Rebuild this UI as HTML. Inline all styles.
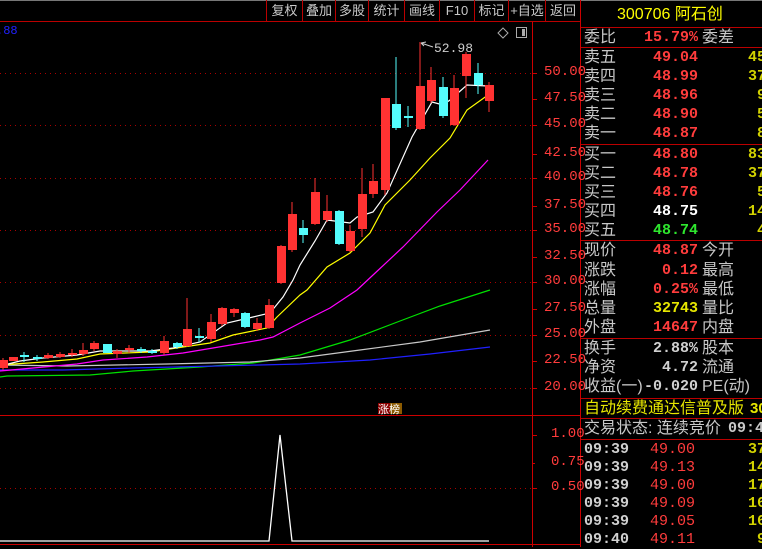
<!DOCTYPE html>
<html><head><meta charset="utf-8"><style>
*{margin:0;padding:0;box-sizing:border-box}
body{width:762px;height:547px;background:#000;overflow:hidden;position:relative;font-family:"Liberation Sans","Noto Sans CJK SC",sans-serif}
.tb{position:absolute;top:0;height:21px;color:#c8c8c8;font-size:13px;line-height:22px;text-align:center;border-right:1px solid #b00}
.p{position:absolute;left:584px;width:178px;font-size:16px;color:#c8c8c8;white-space:nowrap;height:19px;line-height:19px}
.p span{position:absolute}
.l{left:0}.v{right:64px;text-align:right;font-weight:bold;font-family:"Liberation Mono",monospace;font-size:15px}
.r2{left:118px}.y{color:#e6e600}.rd{color:#ff3c3c}.w{color:#fff}.g{color:#2ee62e}.gr{color:#d0d0d0}
.n{left:164px;font-weight:bold;font-family:"Liberation Mono",monospace;color:#d2d200;font-size:15px}
.t{font-weight:bold;font-family:"Liberation Mono",monospace;font-size:15px;color:#d0d0d0}
.hl{position:absolute;left:581px;width:181px;height:1px;background:#b00}
.ax{position:absolute;left:544px;color:#ff3c3c;font-size:14px;font-family:"Liberation Mono",monospace}
</style></head><body>
<div style="position:absolute;left:0;top:0;width:762px;height:1px;background:#777"></div>
<div style="position:absolute;left:0;top:21px;width:581px;height:1px;background:#b00"></div>
<div class="tb" style="left:266px;width:37px;border-left:1px solid #b00">复权</div>
<div class="tb" style="left:303px;width:33px">叠加</div>
<div class="tb" style="left:336px;width:33px">多股</div>
<div class="tb" style="left:369px;width:36px">统计</div>
<div class="tb" style="left:405px;width:35px">画线</div>
<div class="tb" style="left:440px;width:35px">F10</div>
<div class="tb" style="left:475px;width:34px">标记</div>
<div class="tb" style="left:509px;width:37px">+自选</div>
<div class="tb" style="left:546px;width:35px">返回</div>
<div style="position:absolute;left:-4px;top:24px;color:#2020ff;font-size:12px;font-family:'Liberation Mono',monospace">.88</div>

<svg width="581" height="547" style="position:absolute;left:0;top:0">
<g stroke="#a00" stroke-dasharray="1,4" stroke-width="1">
<line x1="0" y1="73.5" x2="532" y2="73.5"/><line x1="0" y1="125.5" x2="532" y2="125.5"/><line x1="0" y1="178.5" x2="532" y2="178.5"/><line x1="0" y1="230.5" x2="532" y2="230.5"/><line x1="0" y1="282.5" x2="532" y2="282.5"/><line x1="0" y1="335.5" x2="532" y2="335.5"/><line x1="0" y1="388.5" x2="532" y2="388.5"/><line x1="0" y1="488.5" x2="532" y2="488.5"/>
</g>
<line x1="532.5" y1="22" x2="532.5" y2="547" stroke="#c00"/>
<line x1="0" y1="415.5" x2="581" y2="415.5" stroke="#c00"/>
<line x1="0" y1="544.5" x2="581" y2="544.5" stroke="#c00"/>
<line x1="580.5" y1="0" x2="580.5" y2="547" stroke="#c00"/>
<g stroke="#c00"><line x1="532" y1="73.5" x2="537" y2="73.5"/><line x1="532" y1="99.5" x2="537" y2="99.5"/><line x1="532" y1="125.5" x2="537" y2="125.5"/><line x1="532" y1="154.5" x2="537" y2="154.5"/><line x1="532" y1="178.5" x2="537" y2="178.5"/><line x1="532" y1="206.5" x2="537" y2="206.5"/><line x1="532" y1="230.5" x2="537" y2="230.5"/><line x1="532" y1="257.5" x2="537" y2="257.5"/><line x1="532" y1="282.5" x2="537" y2="282.5"/><line x1="532" y1="309.5" x2="537" y2="309.5"/><line x1="532" y1="335.5" x2="537" y2="335.5"/><line x1="532" y1="361.5" x2="537" y2="361.5"/><line x1="532" y1="388.5" x2="537" y2="388.5"/><line x1="532" y1="435.5" x2="537" y2="435.5"/><line x1="532" y1="463.5" x2="535" y2="463.5"/><line x1="532" y1="488.5" x2="537" y2="488.5"/></g>
<path d="M503 28 L508 33 L503 38 L498 33 Z" fill="none" stroke="#aaa"/>
<rect x="516.5" y="27.5" width="10" height="10" fill="none" stroke="#aaa"/><rect x="522" y="29" width="3" height="7" fill="#aaa"/>
<g fill="none" stroke-width="1.2">
<polyline stroke="#00e000" points="0,377 7,376 90,375 133,371 200,367 253,363 300,355 350,340 400,321 440,306 490,290"/>
<polyline stroke="#c8c8c8" points="0,365 67,366 167,364 250,362 300,358 360,350 420,342 490,330"/>
<polyline stroke="#2020ff" points="0,370 63,370 133,368 217,366 300,364 370,360 430,354 490,347"/>
<polyline stroke="#ff00ff" points="0,371 33,368 77,364 103,360 147,357 183,353 213,348 260,340 273,337 300,323 330,308 357,290 403,247 437,212 460,190 488,160"/>
<polyline stroke="#ffff00" points="0,365 43,362 77,359 100,354 150,352 183,347 210,343 233,335 267,328 277,317 300,295 307,290 327,267 350,253 370,233 385,205 410,180 430,158 450,138 467,110 488,95"/>
<polyline stroke="#ffffff" points="0,366 20,361 43,358 77,355 100,351 150,351 173,348 200,342 227,323 253,317 270,313 283,297 293,280 300,265 315,241 327,220 350,223 357,217 373,212 387,193 412,137 432,102 443,105 450,100 467,85 488,86"/>
</g>
<g fill="#ff3232" stroke="#ff3232">
<line x1="3" y1="358" x2="3" y2="370"/><rect x="-1" y="360" width="9" height="8" stroke="none"/>
<rect x="9" y="357" width="9" height="4" stroke="none"/>
<line x1="48" y1="353" x2="48" y2="359"/><rect x="44" y="355" width="9" height="3" stroke="none"/>
<line x1="60" y1="352" x2="60" y2="358"/><rect x="56" y="354" width="9" height="3" stroke="none"/>
<line x1="72" y1="349" x2="72" y2="357"/><rect x="68" y="353" width="9" height="2" stroke="none"/>
<line x1="83" y1="343" x2="83" y2="356"/><rect x="79" y="350" width="9" height="4" stroke="none"/>
<line x1="94" y1="341" x2="94" y2="351"/><rect x="90" y="343" width="9" height="6" stroke="none"/>
<line x1="117" y1="349" x2="117" y2="358"/><rect x="113" y="351" width="9" height="3" stroke="none"/>
<line x1="129" y1="345" x2="129" y2="353"/><rect x="125" y="348" width="9" height="2" stroke="none"/>
<line x1="164" y1="336" x2="164" y2="355"/><rect x="160" y="341" width="9" height="12" stroke="none"/>
<line x1="187" y1="298" x2="187" y2="347"/><rect x="183" y="329" width="9" height="17" stroke="none"/>
<line x1="211" y1="314" x2="211" y2="342"/><rect x="207" y="322" width="9" height="17" stroke="none"/>
<line x1="222" y1="307" x2="222" y2="326"/><rect x="218" y="308" width="9" height="16" stroke="none"/>
<line x1="234" y1="308" x2="234" y2="317"/><rect x="230" y="309" width="9" height="4" stroke="none"/>
<line x1="257" y1="318" x2="257" y2="331"/><rect x="253" y="323" width="9" height="6" stroke="none"/>
<line x1="269" y1="299" x2="269" y2="329"/><rect x="265" y="305" width="9" height="23" stroke="none"/>
<line x1="281" y1="245" x2="281" y2="284"/><rect x="277" y="246" width="9" height="37" stroke="none"/>
<line x1="292" y1="202" x2="292" y2="252"/><rect x="288" y="214" width="9" height="36" stroke="none"/>
<line x1="315" y1="178" x2="315" y2="225"/><rect x="311" y="192" width="9" height="32" stroke="none"/>
<line x1="327" y1="195" x2="327" y2="222"/><rect x="323" y="211" width="9" height="9" stroke="none"/>
<line x1="350" y1="225" x2="350" y2="252"/><rect x="346" y="231" width="9" height="20" stroke="none"/>
<line x1="362" y1="168" x2="362" y2="237"/><rect x="358" y="194" width="9" height="35" stroke="none"/>
<line x1="373" y1="164" x2="373" y2="198"/><rect x="369" y="181" width="9" height="13" stroke="none"/>
<line x1="385" y1="98" x2="385" y2="195"/><rect x="381" y="98" width="9" height="92" stroke="none"/>
<line x1="420" y1="42" x2="420" y2="130"/><rect x="416" y="86" width="9" height="43" stroke="none"/>
<line x1="431" y1="67" x2="431" y2="103"/><rect x="427" y="80" width="9" height="21" stroke="none"/>
<line x1="454" y1="75" x2="454" y2="126"/><rect x="450" y="88" width="9" height="37" stroke="none"/>
<line x1="466" y1="52" x2="466" y2="98"/><rect x="462" y="54" width="9" height="22" stroke="none"/>
<line x1="489" y1="82" x2="489" y2="112"/><rect x="485" y="85" width="9" height="16" stroke="none"/>
</g>
<g fill="#54fcfc" stroke="#54fcfc">
<line x1="24" y1="352" x2="24" y2="362"/><rect x="20" y="355" width="9" height="2" stroke="none"/>
<line x1="37" y1="355" x2="37" y2="361"/><rect x="33" y="357" width="9" height="2" stroke="none"/>
<rect x="103" y="344" width="9" height="9" stroke="none"/>
<line x1="141" y1="347" x2="141" y2="353"/><rect x="137" y="349" width="9" height="2" stroke="none"/>
<line x1="152" y1="349" x2="152" y2="354"/><rect x="148" y="351" width="9" height="2" stroke="none"/>
<line x1="177" y1="342" x2="177" y2="349"/><rect x="173" y="343" width="9" height="4" stroke="none"/>
<line x1="199" y1="328" x2="199" y2="342"/><rect x="195" y="336" width="9" height="2" stroke="none"/>
<line x1="245" y1="312" x2="245" y2="328"/><rect x="241" y="313" width="9" height="14" stroke="none"/>
<line x1="303" y1="220" x2="303" y2="243"/><rect x="299" y="228" width="9" height="7" stroke="none"/>
<line x1="339" y1="210" x2="339" y2="245"/><rect x="335" y="211" width="9" height="33" stroke="none"/>
<line x1="396" y1="57" x2="396" y2="130"/><rect x="392" y="104" width="9" height="24" stroke="none"/>
<line x1="408" y1="106" x2="408" y2="127"/><rect x="404" y="116" width="9" height="2" stroke="none"/>
<line x1="443" y1="77" x2="443" y2="118"/><rect x="439" y="87" width="9" height="29" stroke="none"/>
<line x1="478" y1="63" x2="478" y2="94"/><rect x="474" y="73" width="9" height="12" stroke="none"/>
</g>
<path d="M421 43 L426 42 M421 43 L424 46 M421 43 L433 47" stroke="#ccc" fill="none"/>
<text x="434" y="52" fill="#ccc" font-size="13" font-family="Liberation Mono,monospace">52.98</text>
<rect x="378" y="403" width="12" height="11" fill="#8b0000"/><rect x="390" y="403" width="12" height="11" fill="#8b5a00"/>
<text x="378" y="413" fill="#fff" font-size="11" font-family="Noto Sans CJK SC,sans-serif">涨榜</text>
<polyline fill="none" stroke="#fff" stroke-width="1.3" points="0,541 269,541 280,435 292,541 489,541"/>
</svg>

<div class="ax" style="top:64px">50.00</div><div class="ax" style="top:90px">47.50</div><div class="ax" style="top:116px">45.00</div><div class="ax" style="top:145px">42.50</div><div class="ax" style="top:169px">40.00</div><div class="ax" style="top:197px">37.50</div><div class="ax" style="top:221px">35.00</div><div class="ax" style="top:248px">32.50</div><div class="ax" style="top:273px">30.00</div><div class="ax" style="top:300px">27.50</div><div class="ax" style="top:326px">25.00</div><div class="ax" style="top:352px">22.50</div><div class="ax" style="top:379px">20.00</div>
<div class="ax" style="top:426px;left:551px">1.00</div><div class="ax" style="top:454px;left:551px">0.75</div><div class="ax" style="top:479px;left:551px">0.50</div>

<div class="p" style="top:5px;color:#ffff00;left:617px">300706 阿石创</div>
<div class="hl" style="top:27px"></div>
<div class="p" style="top:28px"><span class="l">委比</span><span class="v rd">15.79%</span><span class="r2">委差</span></div>
<div class="hl" style="top:47px"></div>
<div class="p" style="top:48px"><span class="l">卖五</span><span class="v rd">49.04</span><span class="n">45</span></div>
<div class="p" style="top:67px"><span class="l">卖四</span><span class="v rd">48.99</span><span class="n">37</span></div>
<div class="p" style="top:86px"><span class="l">卖三</span><span class="v rd">48.96</span><span class="n">&nbsp;9</span></div>
<div class="p" style="top:105px"><span class="l">卖二</span><span class="v rd">48.90</span><span class="n">&nbsp;5</span></div>
<div class="p" style="top:124px"><span class="l">卖一</span><span class="v rd">48.87</span><span class="n">&nbsp;8</span></div>
<div class="hl" style="top:144px"></div>
<div class="p" style="top:145px"><span class="l">买一</span><span class="v rd">48.80</span><span class="n">83</span></div>
<div class="p" style="top:164px"><span class="l">买二</span><span class="v rd">48.78</span><span class="n">37</span></div>
<div class="p" style="top:183px"><span class="l">买三</span><span class="v rd">48.76</span><span class="n">&nbsp;5</span></div>
<div class="p" style="top:202px"><span class="l">买四</span><span class="v w">48.75</span><span class="n">14</span></div>
<div class="p" style="top:221px"><span class="l">买五</span><span class="v g">48.74</span><span class="n">&nbsp;4</span></div>
<div class="hl" style="top:240px"></div>
<div class="p" style="top:241px"><span class="l">现价</span><span class="v rd">48.87</span><span class="r2">今开</span></div>
<div class="p" style="top:261px"><span class="l">涨跌</span><span class="v rd">0.12</span><span class="r2">最高</span></div>
<div class="p" style="top:280px"><span class="l">涨幅</span><span class="v rd">0.25%</span><span class="r2">最低</span></div>
<div class="p" style="top:299px"><span class="l">总量</span><span class="v y">32743</span><span class="r2">量比</span></div>
<div class="p" style="top:318px"><span class="l">外盘</span><span class="v rd">14647</span><span class="r2">内盘</span></div>
<div class="hl" style="top:338px"></div>
<div class="p" style="top:339px"><span class="l">换手</span><span class="v gr">2.88%</span><span class="r2">股本</span></div>
<div class="p" style="top:358px"><span class="l">净资</span><span class="v gr">4.72</span><span class="r2">流通</span></div>
<div class="p" style="top:377px"><span class="l">收益(一)</span><span class="v gr">-0.020</span><span class="r2">PE(动)</span></div>
<div class="hl" style="top:398px"></div>
<div class="p" style="top:399px;color:#e6e600"><span class="l">自动续费通达信普及版</span><span style="left:166px;font-weight:bold;font-size:15px">30</span></div>
<div class="hl" style="top:418px"></div>
<div class="p" style="top:419px"><span class="l">交易状态: 连续竞价</span><span style="left:144px;font-weight:bold;font-family:'Liberation Mono',monospace;font-size:15px">09:40</span></div>
<div class="hl" style="top:439px"></div>
<div class="p" style="top:440px"><span class="l t">09:39</span><span class="v rd" style="right:67px;font-weight:normal">49.00</span><span class="n">372</span></div>
<div class="p" style="top:458px"><span class="l t">09:39</span><span class="v rd" style="right:67px;font-weight:normal">49.13</span><span class="n">142</span></div>
<div class="p" style="top:476px"><span class="l t">09:39</span><span class="v rd" style="right:67px;font-weight:normal">49.00</span><span class="n">179</span></div>
<div class="p" style="top:494px"><span class="l t">09:39</span><span class="v rd" style="right:67px;font-weight:normal">49.09</span><span class="n">169</span></div>
<div class="p" style="top:512px"><span class="l t">09:39</span><span class="v rd" style="right:67px;font-weight:normal">49.05</span><span class="n">161</span></div>
<div class="p" style="top:530px"><span class="l t">09:40</span><span class="v rd" style="right:67px;font-weight:normal">49.11</span><span class="n">&nbsp;96</span></div>
</body></html>
